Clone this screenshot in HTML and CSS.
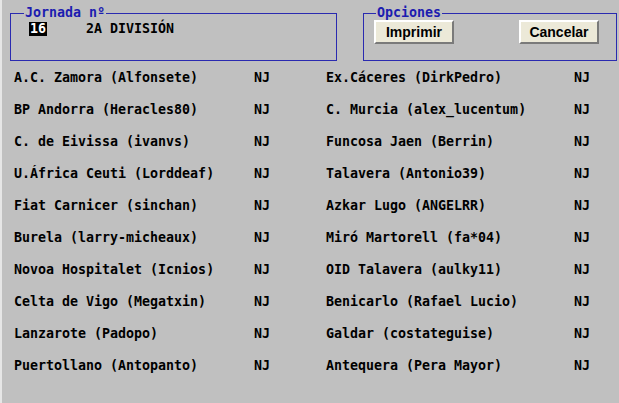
FILE: index.html
```html
<!DOCTYPE html>
<html lang="es">
<head>
    <meta charset="UTF-8">
    <title>Jornada</title>
    <link rel="stylesheet" href="styles.css">
</head>
<body>

    <div class="top">
        <fieldset class="box jornada">
            <legend>Jornada nº</legend>
            <div class="jornada-row">
                <span class="num">16</span>
                <span class="division">2A DIVISIÓN</span>
            </div>
        </fieldset>

        <fieldset class="box opciones">
            <legend>Opciones</legend>
            <div class="buttons">
                <button>Imprimir</button>
                <button>Cancelar</button>
            </div>
        </fieldset>
    </div>

    <div class="partidos">
        <span>A.C. Zamora (Alfonsete)</span><span>NJ</span>
        <span>Ex.Cáceres (DirkPedro)</span><span>NJ</span>

        <span>BP Andorra (Heracles80)</span><span>NJ</span>
        <span>C. Murcia (alex_lucentum)</span><span>NJ</span>

        <span>C. de Eivissa (ivanvs)</span><span>NJ</span>
        <span>Funcosa Jaen (Berrin)</span><span>NJ</span>

        <span>U.África Ceuti (Lorddeaf)</span><span>NJ</span>
        <span>Talavera (Antonio39)</span><span>NJ</span>

        <span>Fiat Carnicer (sinchan)</span><span>NJ</span>
        <span>Azkar Lugo (ANGELRR)</span><span>NJ</span>

        <span>Burela (larry-micheaux)</span><span>NJ</span>
        <span>Miró Martorell (fa*04)</span><span>NJ</span>

        <span>Novoa Hospitalet (Icnios)</span><span>NJ</span>
        <span>OID Talavera (aulky11)</span><span>NJ</span>

        <span>Celta de Vigo (Megatxin)</span><span>NJ</span>
        <span>Benicarlo (Rafael Lucio)</span><span>NJ</span>

        <span>Lanzarote (Padopo)</span><span>NJ</span>
        <span>Galdar (costateguise)</span><span>NJ</span>

        <span>Puertollano (Antopanto)</span><span>NJ</span>
        <span>Antequera (Pera Mayor)</span><span>NJ</span>
    </div>

</body>
</html>
```

FILE: styles.css
```css
html, body {
    margin: 0;
    height: 100%;
}
body {
    background-color: #c0c0c0;
    border-left: 2px solid #e6e6e6;
    font-family: "DejaVu Sans Mono", "Liberation Mono", monospace;
    font-weight: bold;
    font-size: 13.3px;
    color: #000;
    overflow: hidden;
}
.top {
    display: flex;
    padding: 6px 0 0 8px;
}
.box {
    margin: 0;
    padding: 0;
    min-width: 0;
    border: 1px solid #2a2ab0;
    box-sizing: border-box;
}
.box legend {
    padding: 0 1px;
    color: #1c1cb0;
    line-height: 14px;
}
.jornada {
    width: 327px;
    height: 55px;
}
.jornada legend {
    margin-left: 13px;
}
.jornada-row {
    display: flex;
    align-items: center;
    padding: 2px 0 0 18px;
    line-height: 14px;
}
.num {
    background-color: #000;
    color: #fff;
    padding: 0 1px;
}
.division {
    margin-left: 39px;
}
.opciones {
    width: 254px;
    height: 55px;
    margin-left: 26px;
}
.opciones legend {
    margin-left: 12px;
}
.buttons {
    display: flex;
    justify-content: space-between;
    padding: 0 17px 0 10px;
}
button {
    width: 80px;
    height: 24px;
    background-color: #ece9d8;
    border: 2px solid;
    border-color: #ffffff #7a7a7a #7a7a7a #ffffff;
    font-family: "Liberation Sans", Arial, sans-serif;
    font-weight: bold;
    font-size: 14px;
    color: #000;
    padding: 0;
}
.partidos {
    display: grid;
    grid-template-columns: 240px 72px 248px auto;
    grid-auto-rows: 32px;
    align-items: center;
    padding: 1px 0 0 12px;
    line-height: 32px;
}
```
